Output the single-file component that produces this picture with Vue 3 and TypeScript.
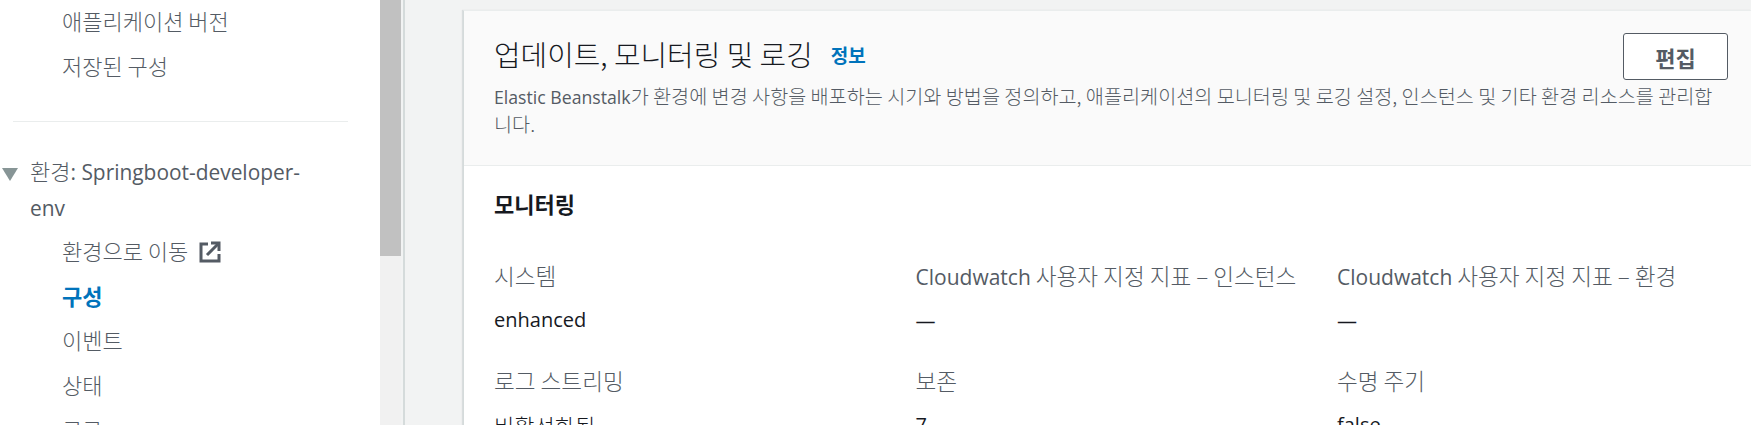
<script setup lang="ts">
interface Field {
  prefix?: string
  label: string
  value: string
}

const topLinks = ['애플리케이션 버전', '저장된 구성']
const envLinks = ['구성', '이벤트', '상태', '로그']
const fields: Field[] = [
  { label: '시스템', value: 'enhanced' },
  { prefix: 'Cloudwatch', label: ' 사용자 지정 지표 – 인스턴스', value: '—' },
  { prefix: 'Cloudwatch', label: ' 사용자 지정 지표 – 환경', value: '—' },
  { label: '로그 스트리밍', value: '비활성화됨' },
  { label: '보존', value: '7' },
  { label: '수명 주기', value: 'false' },
]

const isKorean = (text: string) => /[가-힣]/.test(text)
</script>

<template>
  <div class="page">
    <nav class="sidebar">
      <a v-for="link in topLinks" :key="link" class="nav-link">{{ link }}</a>
      <hr class="divider" />
      <div class="env-head">
        <span class="caret"></span>
        <span class="env-name">환경<span class="latin">: Springboot-developer-env</span></span>
      </div>
      <a class="nav-link">
        환경으로 이동
        <svg class="ext" width="22" height="22" viewBox="0 0 22 22" fill="none" stroke="#545b64" stroke-width="3">
          <path d="M9 3H2v17h18v-7" />
          <path d="M8 14L19 3" />
          <path d="M12 2h8v8" />
        </svg>
      </a>
      <a
        v-for="link in envLinks"
        :key="link"
        class="nav-link"
        :class="{ active: link === '구성' }"
      >{{ link }}</a>
    </nav>
    <div class="scrollbar"><div class="thumb"></div></div>
    <main class="content">
      <section class="card">
        <header class="card-head">
          <div class="title-row">
            <h2 class="title">업데이트, 모니터링 및 로깅</h2>
            <a class="info">정보</a>
            <button class="edit">편집</button>
          </div>
          <p class="desc"><span class="latin">Elastic Beanstalk</span>가 환경에 변경 사항을 배포하는 시기와 방법을 정의하고, 애플리케이션의 모니터링 및 로깅 설정, 인스턴스 및 기타 환경 리소스를 관리합니다.</p>
        </header>
        <div class="card-body">
          <h3 class="section">모니터링</h3>
          <div class="grid">
            <div v-for="field in fields" :key="field.label" class="field">
              <div class="label"><span v-if="field.prefix" class="latin">{{ field.prefix }}</span>{{ field.label }}</div>
              <div class="value" :class="{ latin: !isKorean(field.value) }">{{ field.value }}</div>
            </div>
          </div>
        </div>
      </section>
    </main>
  </div>
</template>

<style>
html,
body {
  margin: 0;
  overflow: hidden;
}
</style>

<style scoped>
.page {
  display: flex;
  width: 1751px;
  height: 425px;
  overflow: hidden;
  background: #f2f3f3;
  font-family: "Noto Sans CJK KR", "Open Sans", sans-serif;
  font-size: 22px;
  font-weight: 300;
  color: #16191f;
}

.latin {
  font-family: "Open Sans", sans-serif;
  font-size: 0.93em;
  font-weight: 400;
}

.sidebar {
  width: 380px;
  flex-shrink: 0;
  background: #fff;
  color: #545b64;
  box-sizing: border-box;
}

.env-name .latin {
  font-size: 0.95em;
}

.nav-link {
  display: flex;
  align-items: center;
  gap: 11px;
  box-sizing: border-box;
  height: 44.5px;
  padding: 0 0 4.4px 62px;
}

.nav-link.active {
  color: #0073bb;
  font-weight: 700;
}

.ext {
  margin-top: 4px;
}

.divider {
  width: 335px;
  height: 1px;
  margin: 32px 0 31px 13px;
  border: 0;
  background: #eaeded;
}

.env-head {
  position: relative;
  padding: 0 60px 0 30px;
  margin-bottom: 5px;
  line-height: 34px;
}

.caret {
  position: absolute;
  left: 2px;
  top: 15px;
  border-left: 8px solid transparent;
  border-right: 8px solid transparent;
  border-top: 13px solid #879596;
}

.scrollbar {
  width: 21px;
  flex-shrink: 0;
  margin-right: 2px;
  background: #f1f1f1;
}

.thumb {
  height: 256px;
  background: #c1c1c1;
}

.content {
  flex: 1;
  min-width: 0;
  padding: 10px 0 0 58px;
  border-left: 2px solid #d5dbdb;
}

.card {
  background: #fff;
  border-left: 1px solid #d5dbdb;
  border-top: 1px solid #eaeded;
  box-shadow: -1px 0 1px rgba(0, 28, 36, 0.1);
}

.card-head {
  height: 155px;
  box-sizing: border-box;
  padding: 22px 23px 0 30px;
  background: #fafafa;
  border-bottom: 1px solid #eaeded;
}

.title-row {
  display: flex;
  align-items: center;
}

.title {
  margin: 0;
  padding-bottom: 7px;
  font-size: 28.9px;
  font-weight: 300;
  line-height: 36px;
}

.info {
  margin-left: 18px;
  margin-bottom: 4px;
  font-size: 19px;
  font-weight: 700;
  color: #0073bb;
}

.edit {
  width: 105px;
  height: 47px;
  margin-left: auto;
  border: 1px solid #545b64;
  border-radius: 3px;
  background: #fff;
  font: inherit;
  font-weight: 700;
  color: #545b64;
}

.desc {
  margin: 3px 0 0;
  font-size: 19.65px;
  line-height: 25.5px;
  color: #545b64;
}

.desc .latin {
  font-size: 0.9em;
}

.card-body {
  padding: 0 31px 0 30px;
}

.section {
  margin: 0;
  padding-top: 22px;
  font-size: 22px;
  font-weight: 700;
  line-height: 30px;
}

.grid {
  display: grid;
  grid-template-columns: repeat(3, 421.5px);
  margin-top: 43px;
  row-gap: 30px;
}

.label {
  font-size: 22.6px;
  color: #545b64;
  line-height: 30px;
}

.value {
  margin-top: 14px;
  line-height: 30px;
}

.value.latin {
  font-size: 20px;
}
</style>
